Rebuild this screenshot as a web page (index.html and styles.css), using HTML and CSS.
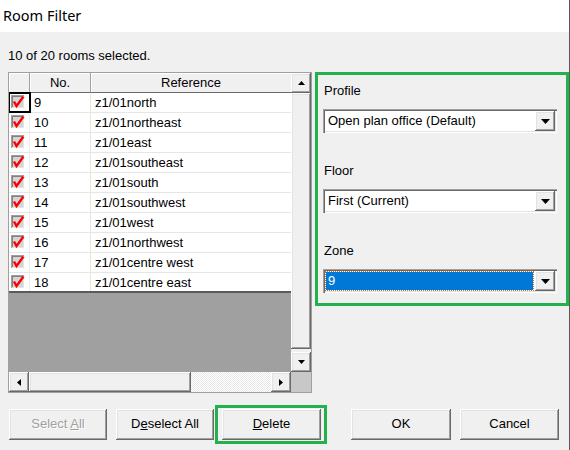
FILE: index.html
```html
<!DOCTYPE html>
<html lang="en">
<head>
  <meta charset="UTF-8">
  <title>Room Filter</title>
  <link rel="stylesheet" href="styles.css">
</head>
<body>
  <div class="window">
    <div class="titlebar">Room Filter</div>
    <div class="client">
      <div class="status">10 of 20 rooms selected.</div>
      <div class="main">
        <div class="grid">
          <div class="list">
            <div class="row head">
              <div class="c-chk"></div>
              <div class="c-no">No.</div>
              <div class="c-ref">Reference</div>
            </div>
            <div class="row"><div class="c-chk focus"><svg class="chk" viewBox="0 0 14 14"><rect width="14" height="14" fill="#fff"/><rect width="13" height="13" fill="#a0a0a0"/><rect x="1" y="1" width="12" height="12" fill="#e3e3e3"/><rect x="1" y="1" width="11" height="11" fill="#808080"/><rect x="2" y="2" width="10" height="10" fill="#d4d4d4"/><path d="M3 6.5 L5.5 11 L12.5 1.5" fill="none" stroke="#f00" stroke-width="2.4"/></svg></div><div class="c-no">9</div><div class="c-ref">z1/01north</div></div>
            <div class="row"><div class="c-chk"><svg class="chk" viewBox="0 0 14 14"><rect width="14" height="14" fill="#fff"/><rect width="13" height="13" fill="#a0a0a0"/><rect x="1" y="1" width="12" height="12" fill="#e3e3e3"/><rect x="1" y="1" width="11" height="11" fill="#808080"/><rect x="2" y="2" width="10" height="10" fill="#d4d4d4"/><path d="M3 6.5 L5.5 11 L12.5 1.5" fill="none" stroke="#f00" stroke-width="2.4"/></svg></div><div class="c-no">10</div><div class="c-ref">z1/01northeast</div></div>
            <div class="row"><div class="c-chk"><svg class="chk" viewBox="0 0 14 14"><rect width="14" height="14" fill="#fff"/><rect width="13" height="13" fill="#a0a0a0"/><rect x="1" y="1" width="12" height="12" fill="#e3e3e3"/><rect x="1" y="1" width="11" height="11" fill="#808080"/><rect x="2" y="2" width="10" height="10" fill="#d4d4d4"/><path d="M3 6.5 L5.5 11 L12.5 1.5" fill="none" stroke="#f00" stroke-width="2.4"/></svg></div><div class="c-no">11</div><div class="c-ref">z1/01east</div></div>
            <div class="row"><div class="c-chk"><svg class="chk" viewBox="0 0 14 14"><rect width="14" height="14" fill="#fff"/><rect width="13" height="13" fill="#a0a0a0"/><rect x="1" y="1" width="12" height="12" fill="#e3e3e3"/><rect x="1" y="1" width="11" height="11" fill="#808080"/><rect x="2" y="2" width="10" height="10" fill="#d4d4d4"/><path d="M3 6.5 L5.5 11 L12.5 1.5" fill="none" stroke="#f00" stroke-width="2.4"/></svg></div><div class="c-no">12</div><div class="c-ref">z1/01southeast</div></div>
            <div class="row"><div class="c-chk"><svg class="chk" viewBox="0 0 14 14"><rect width="14" height="14" fill="#fff"/><rect width="13" height="13" fill="#a0a0a0"/><rect x="1" y="1" width="12" height="12" fill="#e3e3e3"/><rect x="1" y="1" width="11" height="11" fill="#808080"/><rect x="2" y="2" width="10" height="10" fill="#d4d4d4"/><path d="M3 6.5 L5.5 11 L12.5 1.5" fill="none" stroke="#f00" stroke-width="2.4"/></svg></div><div class="c-no">13</div><div class="c-ref">z1/01south</div></div>
            <div class="row"><div class="c-chk"><svg class="chk" viewBox="0 0 14 14"><rect width="14" height="14" fill="#fff"/><rect width="13" height="13" fill="#a0a0a0"/><rect x="1" y="1" width="12" height="12" fill="#e3e3e3"/><rect x="1" y="1" width="11" height="11" fill="#808080"/><rect x="2" y="2" width="10" height="10" fill="#d4d4d4"/><path d="M3 6.5 L5.5 11 L12.5 1.5" fill="none" stroke="#f00" stroke-width="2.4"/></svg></div><div class="c-no">14</div><div class="c-ref">z1/01southwest</div></div>
            <div class="row"><div class="c-chk"><svg class="chk" viewBox="0 0 14 14"><rect width="14" height="14" fill="#fff"/><rect width="13" height="13" fill="#a0a0a0"/><rect x="1" y="1" width="12" height="12" fill="#e3e3e3"/><rect x="1" y="1" width="11" height="11" fill="#808080"/><rect x="2" y="2" width="10" height="10" fill="#d4d4d4"/><path d="M3 6.5 L5.5 11 L12.5 1.5" fill="none" stroke="#f00" stroke-width="2.4"/></svg></div><div class="c-no">15</div><div class="c-ref">z1/01west</div></div>
            <div class="row"><div class="c-chk"><svg class="chk" viewBox="0 0 14 14"><rect width="14" height="14" fill="#fff"/><rect width="13" height="13" fill="#a0a0a0"/><rect x="1" y="1" width="12" height="12" fill="#e3e3e3"/><rect x="1" y="1" width="11" height="11" fill="#808080"/><rect x="2" y="2" width="10" height="10" fill="#d4d4d4"/><path d="M3 6.5 L5.5 11 L12.5 1.5" fill="none" stroke="#f00" stroke-width="2.4"/></svg></div><div class="c-no">16</div><div class="c-ref">z1/01northwest</div></div>
            <div class="row"><div class="c-chk"><svg class="chk" viewBox="0 0 14 14"><rect width="14" height="14" fill="#fff"/><rect width="13" height="13" fill="#a0a0a0"/><rect x="1" y="1" width="12" height="12" fill="#e3e3e3"/><rect x="1" y="1" width="11" height="11" fill="#808080"/><rect x="2" y="2" width="10" height="10" fill="#d4d4d4"/><path d="M3 6.5 L5.5 11 L12.5 1.5" fill="none" stroke="#f00" stroke-width="2.4"/></svg></div><div class="c-no">17</div><div class="c-ref">z1/01centre west</div></div>
            <div class="row last"><div class="c-chk"><svg class="chk" viewBox="0 0 14 14"><rect width="14" height="14" fill="#fff"/><rect width="13" height="13" fill="#a0a0a0"/><rect x="1" y="1" width="12" height="12" fill="#e3e3e3"/><rect x="1" y="1" width="11" height="11" fill="#808080"/><rect x="2" y="2" width="10" height="10" fill="#d4d4d4"/><path d="M3 6.5 L5.5 11 L12.5 1.5" fill="none" stroke="#f00" stroke-width="2.4"/></svg></div><div class="c-no">18</div><div class="c-ref">z1/01centre east</div></div>
            <div class="empty"></div>
          </div>
          <div class="vscroll">
            <div class="sbtn raised"><svg viewBox="0 0 7 4" class="arr-v"><path d="M3.5 0 L7 4 L0 4 Z"/></svg></div>
            <div class="vthumb raised"></div>
            <div class="sbtn raised"><svg viewBox="0 0 7 4" class="arr-v"><path d="M0 0 L7 0 L3.5 4 Z"/></svg></div>
          </div>
          <div class="hscroll">
            <div class="sbtn raised"><svg viewBox="0 0 4 7" class="arr-h"><path d="M4 0 L4 7 L0 3.5 Z"/></svg></div>
            <div class="hthumb raised"></div>
            <div class="htrack"></div>
            <div class="sbtn raised"><svg viewBox="0 0 4 7" class="arr-h"><path d="M0 0 L4 3.5 L0 7 Z"/></svg></div>
          </div>
          <div class="corner"></div>
        </div>

        <div class="panel">
          <div class="field">
            <div class="label">Profile</div>
            <div class="combo">
              <span class="value">Open plan office (Default)</span>
              <span class="drop raised"><svg viewBox="0 0 9 5" class="arr-d"><path d="M0 0 L9 0 L4.5 5 Z"/></svg></span>
            </div>
          </div>
          <div class="field">
            <div class="label">Floor</div>
            <div class="combo">
              <span class="value">First (Current)</span>
              <span class="drop raised"><svg viewBox="0 0 9 5" class="arr-d"><path d="M0 0 L9 0 L4.5 5 Z"/></svg></span>
            </div>
          </div>
          <div class="field">
            <div class="label">Zone</div>
            <div class="combo">
              <span class="value selected">9</span>
              <span class="drop raised"><svg viewBox="0 0 9 5" class="arr-d"><path d="M0 0 L9 0 L4.5 5 Z"/></svg></span>
            </div>
          </div>
        </div>
      </div>

      <div class="buttons">
        <div class="btn raised disabled w98">Select <u>A</u>ll</div>
        <div class="btn raised w98 ml9">D<u>e</u>select All</div>
        <div class="mark">
          <div class="btn raised w99"><u>D</u>elete</div>
        </div>
        <div class="btn raised default ok">OK</div>
        <div class="btn raised w99 ml9">Cancel</div>
      </div>
    </div>
  </div>
</body>
</html>
```

FILE: styles.css
```css
body {
  margin: 0;
  font-family: "Liberation Sans", Arial, sans-serif;
  font-size: 13px;
  color: #000;
  background: #f0f0f0;
}
.window {
  width: 569px;
  height: 450px;
  border-right: 1px solid #5a5a5a;
  background: #f0f0f0;
}
.titlebar {
  height: 32px;
  line-height: 31px;
  padding-left: 3px;
  background: #fff;
  font-family: "Noto Sans", "Open Sans", sans-serif;
  font-size: 14.5px;
}
.client {
  padding: 16px 0 0 8px;
}
.status {
  line-height: 16px;
  margin-bottom: 8px;
}
.main {
  display: flex;
  align-items: flex-start;
  gap: 3px;
}

/* 3D look of classic controls */
.raised {
  background: #f0f0f0;
  box-shadow: inset -1px -1px #696969, inset 1px 1px #fff, inset -2px -2px #a0a0a0, inset 2px 2px #e3e3e3;
}

/* grid */
.grid {
  display: grid;
  grid-template-columns: 282px 20px;
  grid-template-rows: 299px 20px;
  border: 1px solid #a0a0a0;
  background: #f0f0f0;
}
.list {
  display: flex;
  flex-direction: column;
  overflow: hidden;
}
.row {
  display: flex;
  height: 19px;
  line-height: 19px;
  border-bottom: 1px solid #e6e6e6;
  background: #fff;
}
.row > div {
  box-sizing: border-box;
  white-space: nowrap;
}
.c-chk {
  width: 21px;
  padding: 2px 0 0 2px;
  border-right: 1px solid #ececec;
}
.c-no {
  width: 61px;
  padding-left: 4px;
  border-right: 1px solid #e6e6e6;
}
.c-ref {
  width: 200px;
  padding-left: 4px;
}
.chk {
  width: 14px;
  height: 14px;
  display: block;
}
.focus {
  outline: 2px solid #000;
  outline-offset: -1px;
}
.row.head {
  background: #f0f0f0;
  border-bottom: 1px solid #a0a0a0;
}
.row.head > div {
  padding: 0;
  text-align: center;
  border-right: 1px solid #a0a0a0;
  box-shadow: inset 1px 1px #fff;
}
.row.head .c-ref {
  border-right: none;
}
.row.head .c-no,
.row.head .c-ref {
  border-bottom: 1px solid #696969;
  height: 20px;
}
.row.last {
  border-bottom: 2px solid #5a5a5a;
  height: 18px;
}
.empty {
  flex: 1;
  background: #a0a0a0;
}

.vscroll {
  display: flex;
  flex-direction: column;
}
.sbtn {
  width: 20px;
  height: 20px;
  flex: none;
  display: flex;
  align-items: center;
  justify-content: center;
}
.vthumb {
  height: 256px;
  margin-bottom: 3px;
}
.arr-v {
  width: 7px;
  height: 4px;
}
.arr-h {
  width: 4px;
  height: 7px;
}
.hscroll {
  display: flex;
}
.hthumb {
  width: 162px;
}
.htrack {
  width: 80px;
  background-color: #fff;
  background-image: repeating-conic-gradient(#e8e8e8 0 25%, #fff 0 50%);
  background-size: 2px 2px;
}
.corner {
  background: #c8c8c8;
}

/* right panel */
.panel {
  width: 245px;
  border: 3px solid #22b14c;
  padding: 8px 3px 10px 5px;
}
.field {
  margin-bottom: 30px;
}
.field:last-child {
  margin-bottom: 0;
}
.label {
  line-height: 16px;
  margin-bottom: 10px;
  padding-left: 1px;
}
.combo {
  width: 234px;
  height: 24px;
  box-sizing: border-box;
  padding: 2px;
  display: flex;
  background: #fff;
  box-shadow: inset 1px 1px #a0a0a0, inset 2px 2px #696969, inset -1px -1px #fff, inset -2px -2px #e3e3e3;
}
.value {
  flex: 1;
  line-height: 20px;
  padding-left: 3px;
  white-space: nowrap;
}
.value.selected {
  margin: 1px 2px 1px 1px;
  padding-left: 2px;
  line-height: 18px;
  background: #0078d7;
  color: #fff;
  outline: 1px dotted #d07020;
}
.drop {
  width: 20px;
  height: 20px;
  display: flex;
  align-items: center;
  justify-content: center;
}
.arr-d {
  width: 9px;
  height: 5px;
}

/* bottom buttons */
.buttons {
  display: flex;
  align-items: center;
  margin-top: 12px;
  padding-left: 1px;
}
.btn {
  height: 31px;
  line-height: 30px;
  text-align: center;
  box-sizing: border-box;
}
.w98 {
  width: 98px;
}
.w99 {
  width: 99px;
}
.ml9 {
  margin-left: 9px;
}
.disabled {
  color: #a0a0a0;
  text-shadow: 1px 1px #fff;
}
.mark {
  margin-left: 1px;
  border: 3px solid #22b14c;
  padding: 1px 3px 1px 4px;
}
.ok {
  width: 100px;
  margin-left: 24px;
}
```
